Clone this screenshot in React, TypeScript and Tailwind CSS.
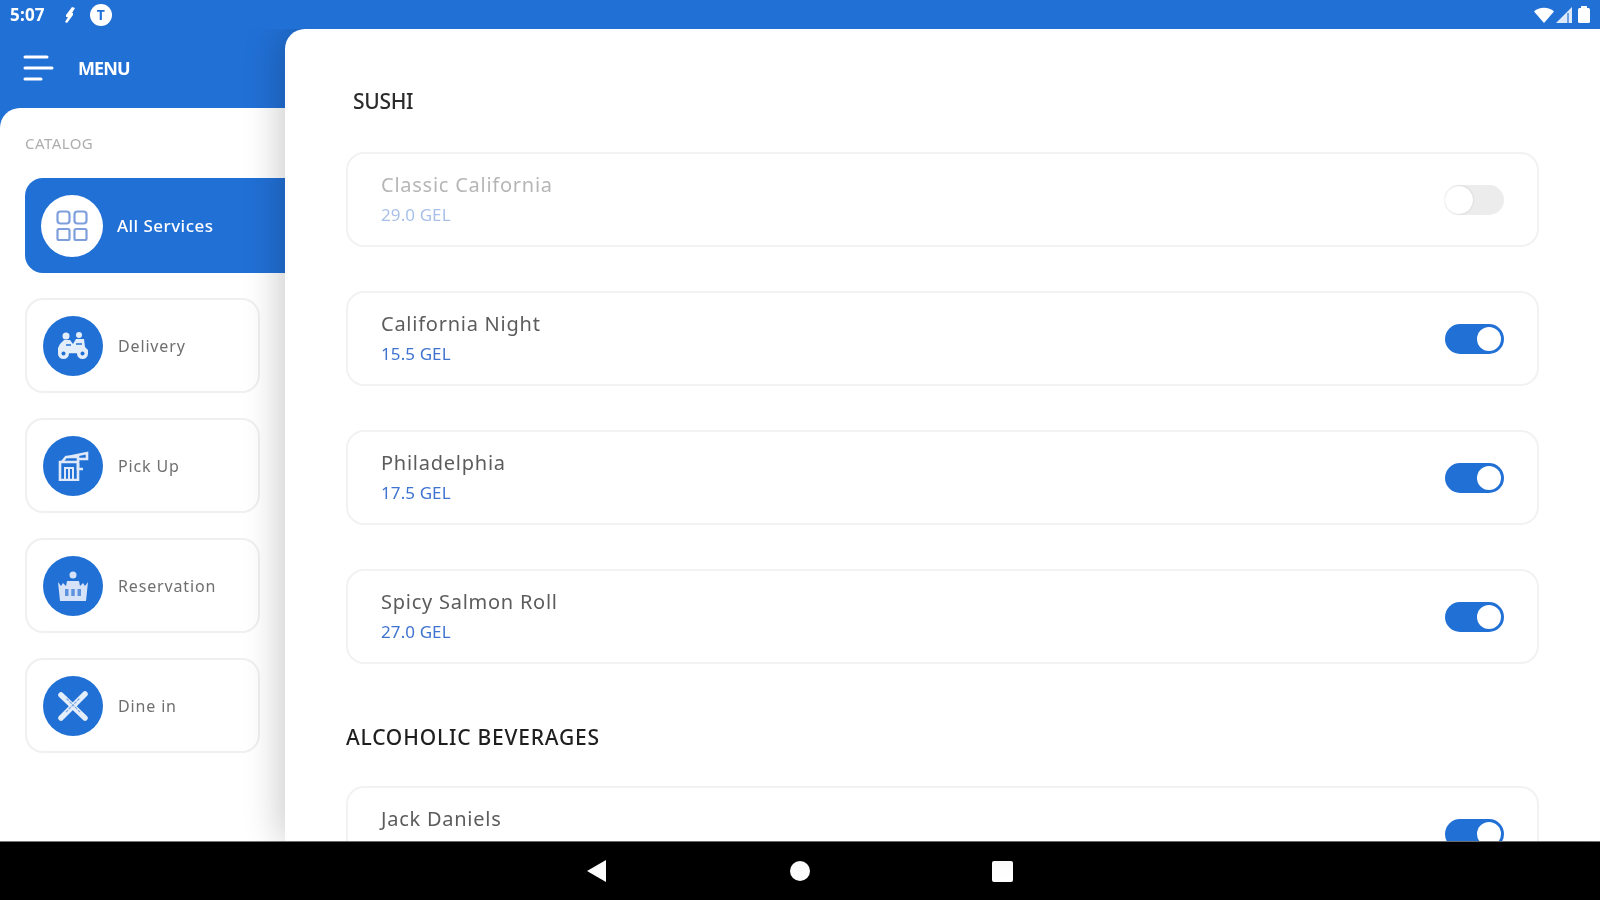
import React from "react";

const BLUE = "bg-[#2170d6]";

function Hamburger() {
  return (
    <svg width="32" height="28" viewBox="0 0 32 28" fill="none" stroke="#fff" strokeWidth="3" strokeLinecap="round">
      <path d="M2 3H24" />
      <path d="M2 14H29" />
      <path d="M2 25H18" />
    </svg>
  );
}

function GridIcon() {
  return (
    <svg width="32" height="32" viewBox="0 0 32 32" fill="none" stroke="#7f9fdc" strokeWidth="2.2">
      <rect x="1.5" y="1.5" width="12" height="12" rx="3" />
      <rect x="18.5" y="1.5" width="12" height="12" rx="3" />
      <rect x="1.5" y="19" width="12" height="11" rx="1.5" />
      <rect x="18.5" y="19" width="12" height="11" rx="1.5" />
    </svg>
  );
}

function DeliveryIcon() {
  return (
    <svg width="32" height="28" viewBox="0 0 32 28" fill="#e4edfa">
      <circle cx="9" cy="4" r="3.5" />
      <circle cx="22" cy="3" r="3" />
      <path d="M3 12l4-4h6l3 4 3-5h8l1 8 3 3v4H1v-6z" />
      <circle cx="6.500" cy="21.500" r="5.500" />
      <circle cx="25.500" cy="21.500" r="5.500" />
      <path d="M9 13h5M19 12h6M12 22h8" stroke="#2170d6" strokeWidth="1.5" />
      <circle cx="6.500" cy="21.500" r="2" fill="#2170d6" />
      <circle cx="25.500" cy="21.500" r="2" fill="#2170d6" />
    </svg>
  );
}

function PickupIcon() {
  return (
    <svg width="32" height="30" viewBox="0 0 32 30" fill="none" stroke="#dfe9f9" strokeWidth="2.6">
      <path d="M3 11h18v18H3z" />
      <path d="M5 11l4-5h12v5" />
      <path d="M11 6l19-4v6H21" />
      <path d="M8 17h8v12H8zM12 17v12" strokeWidth="2" />
      <path d="M21 12v6h5" />
    </svg>
  );
}

function ReservationIcon() {
  return (
    <svg width="32" height="30" viewBox="0 0 32 30" fill="#d5e2f7">
      <circle cx="16" cy="4" r="3.500" />
      <path d="M10 10h12l1 5 3-3 2 3 3-4-2 19H3L1 11l3 4 2-3 3 3z" />
      <rect x="8" y="18" width="3.500" height="7" fill="#5d92de" />
      <rect x="14.250" y="18" width="3.500" height="7" fill="#5d92de" />
      <rect x="20.500" y="18" width="3.500" height="7" fill="#5d92de" />
    </svg>
  );
}

function DineIcon() {
  return (
    <svg width="32" height="32" viewBox="0 0 32 32" fill="none" stroke="#e4edfa" strokeLinecap="round">
      <path d="M4 5l24 23" strokeWidth="5.500" />
      <path d="M28 4L4 28" strokeWidth="5.500" />
      <path d="M10 9l13 13M22 9L9 22" stroke="#7fa8e6" strokeWidth="1.200" strokeDasharray="2 2" />
    </svg>
  );
}

function Toggle({ on }: { on: boolean }) {
  if (on) {
    return (
      <div className="flex h-[30px] w-[59px] items-center justify-end rounded-full bg-[#2170d6] pr-[3px]">
        <div className="h-[24px] w-[24px] rounded-full bg-white" />
      </div>
    );
  }
  return (
    <div className="flex h-[30px] w-[59px] items-center rounded-full bg-[#ececec]">
      <div className="h-[28px] w-[28px] rounded-full bg-white shadow-[0_0_2px_rgba(0,0,0,0.18)]" />
    </div>
  );
}

function ProductCard({ name, price, on = true, disabled = false }: { name: string; price?: string; on?: boolean; disabled?: boolean }) {
  return (
    <div className="flex h-[95px] shrink-0 items-center justify-between rounded-[18px] border-2 border-[#f2f2f2] bg-white pl-[33px] pr-[33px]">
      <div className={disabled ? "flex flex-col pb-[1px] opacity-45" : "flex flex-col pb-[1px]"}>
        <span className="text-[20px] leading-[26px] tracking-[0.75px] text-[#5c5c5c]">{name}</span>
        <span className="mt-[6px] h-[22px] text-[17px] leading-[22px] tracking-[0.1px] text-[#3f73d0]">{price}</span>
      </div>
      <Toggle on={on} />
    </div>
  );
}

function NavItem({ icon, label }: { icon: React.ReactNode; label: string }) {
  return (
    <div className="flex h-[95px] w-[235px] items-center rounded-[18px] border-2 border-[#f0f0f0] pl-[16px]">
      <div className={`flex h-[60px] w-[60px] shrink-0 items-center justify-center rounded-full ${BLUE}`}>{icon}</div>
      <span className="ml-[15px] text-[16px] tracking-[0.85px] text-[#6f6f6f]">{label}</span>
    </div>
  );
}

export default function App() {
  return (
    <div
      className="flex h-[900px] w-[1600px] flex-col overflow-hidden bg-black blur-[0.7px]"
      style={{ fontFamily: '"Noto Sans", "Open Sans", sans-serif' }}
    >
      <div className={`relative z-20 flex h-[29px] shrink-0 items-center justify-between pl-[10px] pr-[10px] text-white ${BLUE}`}>
        <div className="flex items-center">
          <span className="text-[17px] font-bold leading-none tracking-[0.2px]">5:07</span>
          <svg className="ml-[19px]" width="12" height="18" viewBox="0 0 12 18" fill="#fff">
            <path d="M8 1l3 1-3 5h1v2L3 17l-2-1 3-5H2V9z" />
          </svg>
          <div className="ml-[14px] flex h-[22px] w-[22px] items-center justify-center rounded-full bg-white">
            <span className="text-[14px] font-bold leading-none text-[#2170d6]">T</span>
          </div>
        </div>
        <div className="flex items-center gap-[2px]">
          <svg width="20" height="16" viewBox="0 0 20 16" fill="#fff">
            <path d="M0 4.500C5 -0.500 15 -0.500 20 4.500L10 16z" />
          </svg>
          <svg width="17" height="16" viewBox="0 0 17 16">
            <path d="M0 16L16 0v16z" fill="#fff" opacity="0.85" />
            <path d="M11 6h2v10h-2z" fill="#2170d6" opacity="0.6" />
          </svg>
          <svg className="ml-[3px]" width="12" height="17" viewBox="0 0 12 17" fill="#fff">
            <rect x="0" y="2" width="12" height="15" rx="1.500" />
            <rect x="3" y="0" width="6" height="3" />
          </svg>
        </div>
      </div>

      <div className={`flex min-h-0 flex-1 ${BLUE}`}>
        <aside className="flex w-[285px] shrink-0 flex-col">
          <div className="flex h-[79px] shrink-0 items-center pb-[1px] pl-[23px]">
            <Hamburger />
            <span className="ml-[23px] text-[18px] font-bold leading-none tracking-[-0.9px] text-white">MENU</span>
          </div>
          <div className="flex flex-1 flex-col rounded-tl-[20px] bg-white pl-[25px]">
            <div className="mt-[26px] text-[15px] leading-[18px] tracking-[0.45px] text-[#aeaeae]">CATALOG</div>
            <div className="mt-[26px] flex flex-col gap-[25px]">
              <div className={`flex h-[95px] items-center rounded-l-[18px] pl-[16px] ${BLUE}`}>
                <div className="flex h-[62px] w-[62px] shrink-0 items-center justify-center rounded-full bg-white">
                  <GridIcon />
                </div>
                <span className="ml-[14px] text-[17px] font-medium tracking-[0.45px] text-white">All Services</span>
              </div>
              <NavItem icon={<DeliveryIcon />} label="Delivery" />
              <NavItem icon={<PickupIcon />} label="Pick Up" />
              <NavItem icon={<ReservationIcon />} label="Reservation" />
              <NavItem icon={<DineIcon />} label="Dine in" />
            </div>
          </div>
        </aside>

        <main className="relative z-10 min-w-0 flex-1 rounded-tl-[20px] bg-white shadow-[-6px_0_36px_rgba(0,0,0,0.2)]">
          <div className="flex h-full flex-col overflow-hidden pl-[61px] pr-[61px]">
            <h2 className="ml-[7px] mt-[58px] text-[21px] font-medium leading-[28px] tracking-[-0.3px] text-[#2b2b2b]">SUSHI</h2>
            <div className="mt-[37px] flex flex-col gap-[44px]">
              <ProductCard name="Classic California" price="29.0 GEL" on={false} disabled />
              <ProductCard name="California Night" price="15.5 GEL" />
              <ProductCard name="Philadelphia" price="17.5 GEL" />
              <ProductCard name="Spicy Salmon Roll" price="27.0 GEL" />
            </div>
            <h2 className="mt-[59px] text-[21px] font-medium leading-[28px] tracking-[0.8px] text-[#1f1f1f]">ALCOHOLIC BEVERAGES</h2>
            <div className="mt-[35px] flex flex-col">
              <ProductCard name="Jack Daniels" />
            </div>
          </div>
        </main>
      </div>

      <div className="flex h-[59px] shrink-0 items-center justify-center border-t border-[#777] bg-black">
        <svg width="20" height="22" viewBox="0 0 20 22" fill="#fff" className="mr-[183px]">
          <path d="M0 11L19 0v22z" />
        </svg>
        <div className="h-[20px] w-[20px] rounded-full bg-white" />
        <div className="ml-[182px] h-[21px] w-[21px] rounded-[2px] bg-white" />
      </div>
    </div>
  );
}
